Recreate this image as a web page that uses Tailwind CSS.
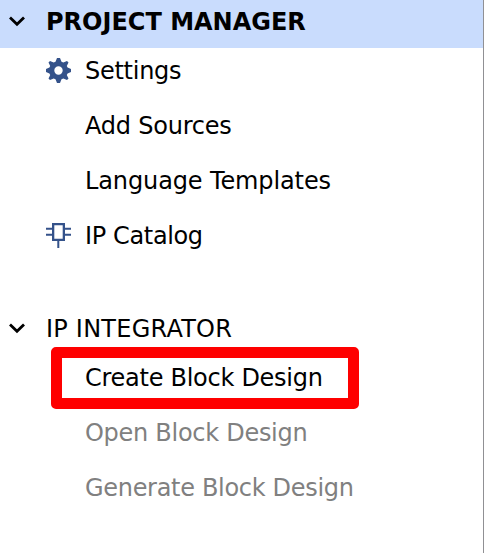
<!DOCTYPE html>
<html lang="en"><head><meta charset="utf-8"><title>Flow Navigator</title>
<script src="https://cdn.jsdelivr.net/npm/@tailwindcss/browser@4"></script></head>
<body class="bg-white">
<div class="relative flex h-[553px] w-[490px] overflow-hidden font-['DejaVu_Sans',sans-serif] text-[24px] text-black whitespace-nowrap">
<nav class="h-full w-[484px] border-r border-[#909094]">
<div class="flex h-12 items-center bg-[#c9dcfd] pb-1">
<svg class="ml-2 mr-5 h-[18px] w-[18px]" viewBox="0 0 18 18" fill="none" stroke="#000" stroke-width="2.8"><path d="M2 4.500 9 11.300 16 4.500"/></svg>
<h2 class="font-bold">PROJECT MANAGER</h2></div>
<ul class="-mt-1 leading-[55px]">
<li class="flex h-[55px] items-center pl-[46px] tracking-[-0.27px]"><svg class="mr-[14px] mb-[3px] h-[25px] w-[25px]" viewBox="0 0 25 25" fill="#34528a"><path fill-rule="evenodd" d="M11 0h3l1.500 3.700 1.800.8L21 3 22.500 4.500 20.800 8l.8 1.600L25 11v3l-3.400 1.400-.8 1.600 1.700 3.500L21 22l-3.700-1.500-1.800.8L14 25h-3l-1.500-3.700-1.800-.8L4 22 2.500 20.500 4.200 17l-.8-1.600L0 14v-3l3.400-1.400L4.200 8 2.500 4.500 4 3l3.700 1.500 1.800-.8zM12.500 8.300a4.200 4.200 0 1 0 0 8.400 4.200 4.200 0 0 0 0-8.400z"/></svg>Settings</li>
<li class="pl-[85px] tracking-[-0.22px]">Add Sources</li><li class="pl-[85px] tracking-[-0.12px]">Language Templates</li>
<li class="flex h-[55px] items-center pl-[46px] tracking-[-0.36px]"><svg class="mr-[14px] mb-[3px] h-[25px] w-[25px]" viewBox="0 0 25 25" fill="none" stroke="#34528a"><path stroke-width="2.300" d="M7.150 1.150h10.700v15.700H7.150z"/><path stroke-width="2" d="M0 5.700h6M0 11.700h6M19 5.700h6M19 11.700h6M12.300 18v7"/></svg>IP Catalog</li></ul>
<div class="mt-[37px] flex h-[55px] items-center"><svg class="ml-2 mr-5 h-[18px] w-[18px]" viewBox="0 0 18 18" fill="none" stroke="#000" stroke-width="2.800"><path d="M2 4.500 9 11.300 16 4.500"/></svg><h2 class="tracking-[0.23px]">IP INTEGRATOR</h2></div>
<ul class="-mt-[5px] pl-[85px] leading-[55px]"><li class="tracking-[-0.27px]">Create Block Design</li><li class="tracking-[-0.28px] text-[#808080]">Open Block Design</li><li class="tracking-[-0.31px] text-[#808080]">Generate Block Design</li></ul>
</nav>
<div class="absolute left-[51px] top-[347px] h-[62px] w-[308px] rounded-[5px] border-[11px] border-[#fe0000]"></div>
</div></body></html>
